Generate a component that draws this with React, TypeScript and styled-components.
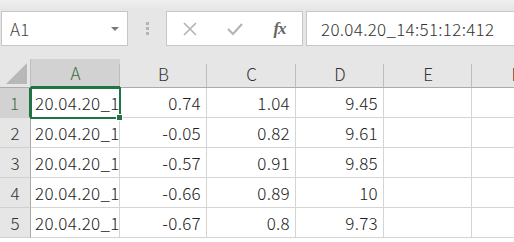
import React from "react";
import styled, { createGlobalStyle } from "styled-components";

const GlobalStyle = createGlobalStyle`
	html, body {
		margin: 0;
		padding: 0;
		background: #ffffff;
		overflow: hidden;
	}
	body {
		font-family: "Noto Sans CJK JP", "Noto Sans", sans-serif;
	}
`;

const Page = styled.div`
	width: 514px;
	height: 242px;
	overflow: hidden;
	background: #ffffff;
`;

const Toolbar = styled.div`
	display: flex;
	align-items: center;
	height: 59px;
	padding: 0 0 2px 1px;
	box-sizing: border-box;
	background: linear-gradient(#f0f0f0 0px, #e6e6e6 10px, #e6e6e6 100%);
`;

const Box = styled.div<{ $width: number; $gap?: number }>`
	display: flex;
	align-items: center;
	box-sizing: border-box;
	width: ${(p) => p.$width}px;
	height: 35px;
	margin-left: ${(p) => p.$gap ?? 0}px;
	background: #ffffff;
	border: 1px solid #c6c6c6;
	flex-shrink: 0;
`;

const NameText = styled.span`
	flex: 1;
	padding-left: 8px;
	font-size: 17px;
	font-weight: 300;
	letter-spacing: 0.3px;
	color: #444444;
`;

const DropArrow = styled.span`
	width: 0;
	height: 0;
	margin-right: 8px;
	border-left: 4px solid transparent;
	border-right: 4px solid transparent;
	border-top: 4px solid #7a7a7a;
`;

const Grip = styled.div`
	display: flex;
	flex-direction: column;
	gap: 2px;
	width: 38px;
	align-items: center;
	flex-shrink: 0;
	span {
		width: 3px;
		height: 3px;
		background: #b4b4b4;
	}
`;

const IconSlot = styled.div`
	display: flex;
	align-items: center;
	justify-content: center;
	width: 45px;
	height: 100%;
`;

const Fx = styled.span`
	font-family: "Liberation Serif", serif;
	font-style: italic;
	font-weight: bold;
	font-size: 17px;
	color: #666666;
	letter-spacing: -1px;
`;

const FormulaText = styled.span`
	padding-left: 14px;
	font-size: 17px;
	font-weight: 300;
	letter-spacing: 0.3px;
	color: #333333;
	white-space: nowrap;
`;

const Sheet = styled.div`
	position: relative;
	display: grid;
	grid-template-columns: 31px 89px 87px 89px 88px 88px 88px;
	grid-template-rows: 29px;
	grid-auto-rows: 30px;
	width: 570px;
`;

const Corner = styled.div`
	position: relative;
	background: #e6e6e6;
	border-right: 1px solid #bdbdbd;
	border-bottom: 1px solid #ababab;
	box-sizing: border-box;
	&::after {
		content: "";
		position: absolute;
		right: 3px;
		bottom: 3px;
		width: 0;
		height: 0;
		border-left: 21px solid transparent;
		border-bottom: 21px solid #b8b8b8;
	}
`;

const ColHead = styled.div<{ $active?: boolean }>`
	position: relative;
	display: flex;
	align-items: center;
	justify-content: center;
	box-sizing: border-box;
	background: ${(p) => (p.$active ? "#d2d2d2" : "#e6e6e6")};
	border-bottom: ${(p) => (p.$active ? "2px solid #217346" : "1px solid #ababab")};
	font-size: 17px;
	font-weight: 300;
	color: ${(p) => (p.$active ? "#3b6b3b" : "#333333")};
	white-space: nowrap;
	&::after {
		content: "";
		position: absolute;
		right: 0;
		top: 5px;
		bottom: 0;
		width: 1px;
		background: #bdbdbd;
	}
`;

const RowHead = styled.div<{ $active?: boolean }>`
	display: flex;
	align-items: center;
	justify-content: center;
	box-sizing: border-box;
	background: ${(p) => (p.$active ? "#d2d2d2" : "#e6e6e6")};
	border-right: ${(p) => (p.$active ? "2px solid #217346" : "1px solid #ababab")};
	border-bottom: 1px solid #d0d0d0;
	font-size: 17px;
	font-weight: 300;
	color: ${(p) => (p.$active ? "#3b6b3b" : "#333333")};
`;

const Cell = styled.div<{ $num?: boolean }>`
	display: flex;
	align-items: center;
	justify-content: ${(p) => (p.$num ? "flex-end" : "flex-start")};
	box-sizing: border-box;
	padding: ${(p) => (p.$num ? "0 5px 0 4px" : "0 0 0 4px")};
	border-right: 1px solid #d4d4d4;
	border-bottom: 1px solid #d4d4d4;
	font-size: 17px;
	font-weight: 300;
	letter-spacing: 0.3px;
	color: #222222;
	white-space: nowrap;
	overflow: hidden;
`;

const Clip = styled.span`
	display: block;
	width: 100%;
	overflow: hidden;
	white-space: nowrap;
`;

const Selection = styled.div`
	position: absolute;
	left: 30px;
	top: 28px;
	width: 91px;
	height: 32px;
	box-sizing: border-box;
	border: 2px solid #217346;
	pointer-events: none;
	&::after {
		content: "";
		position: absolute;
		right: -4px;
		bottom: -4px;
		width: 5px;
		height: 5px;
		background: #217346;
		border: 1px solid #ffffff;
	}
`;

const columns = ["A", "B", "C", "D", "E", "F"];

const rows: [string, string, string, string][] = [
	["20.04.20_14:51:12:412", "0.74", "1.04", "9.45"],
	["20.04.20_14:51:12:512", "-0.05", "0.82", "9.61"],
	["20.04.20_14:51:12:612", "-0.57", "0.91", "9.85"],
	["20.04.20_14:51:12:712", "-0.66", "0.89", "10"],
	["20.04.20_14:51:12:812", "-0.67", "0.8", "9.73"],
];

export default function App() {
	return (
		<Page>
			<GlobalStyle />
			<Toolbar>
				<Box $width={127}>
					<NameText>A1</NameText>
					<DropArrow />
				</Box>
				<Grip>
					<span />
					<span />
					<span />
				</Grip>
				<Box $width={137}>
					<IconSlot>
						<svg width="16" height="16" viewBox="0 0 16 16">
							<path d="M2 2 L14 14 M14 2 L2 14" stroke="#b4b4b4" strokeWidth="1.6" fill="none" />
						</svg>
					</IconSlot>
					<IconSlot>
						<svg width="18" height="16" viewBox="0 0 18 16">
							<path d="M2 8 L7 13 L16 3" stroke="#b4b4b4" strokeWidth="2.2" fill="none" />
						</svg>
					</IconSlot>
					<IconSlot>
						<Fx>fx</Fx>
					</IconSlot>
				</Box>
				<Box $width={212} $gap={3}>
					<FormulaText>20.04.20_14:51:12:412</FormulaText>
				</Box>
			</Toolbar>
			<Sheet>
				<Corner />
				{columns.map((c) => (
					<ColHead key={c} $active={c === "A"}>
						{c}
					</ColHead>
				))}
				{rows.map((r, i) => (
					<React.Fragment key={i}>
						<RowHead $active={i === 0}>{i + 1}</RowHead>
						<Cell>
							<Clip>{r[0]}</Clip>
						</Cell>
						<Cell $num>{r[1]}</Cell>
						<Cell $num>{r[2]}</Cell>
						<Cell $num>{r[3]}</Cell>
						<Cell />
						<Cell />
					</React.Fragment>
				))}
				<Selection />
			</Sheet>
		</Page>
	);
}
